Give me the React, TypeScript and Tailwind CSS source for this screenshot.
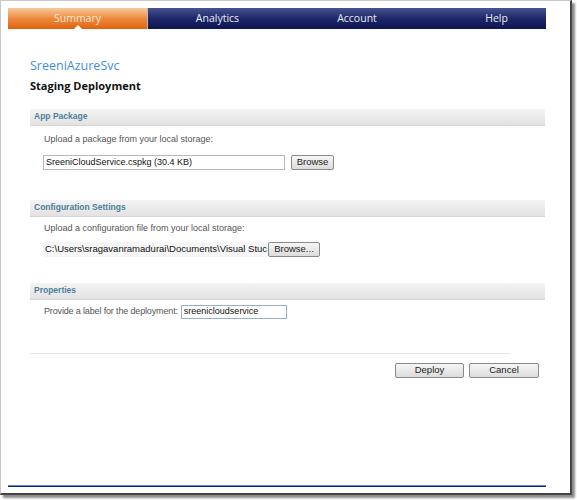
import React from "react";

const font = { fontFamily: '"Open Sans", "Noto Sans", Arial, sans-serif' };
const small = { fontFamily: '"Liberation Sans", Arial, sans-serif' };

function SectionHeader({ title }: { title: string }) {
  return (
    <div className="h-[17px] bg-gradient-to-b from-[#f4f4f4] to-[#e2e2e2] border-b border-[#d6d6d6] flex items-center pl-[4px]">
      <span className="text-[8.5px] font-bold text-[#4f7f9c] leading-none" style={small}>{title}</span>
    </div>
  );
}

function Btn({ label, className = "" }: { label: string; className?: string }) {
  return (
    <div
      className={`h-[15px] border border-[#8a8a8a] rounded-[2px] bg-gradient-to-b from-[#f6f6f6] to-[#dcdcdc] flex items-center justify-center text-[9.5px] text-[#222] leading-none ${className}`}
      style={small}
    >
      {label}
    </div>
  );
}

export default function App() {
  return (
    <div className="w-[577px] h-[500px] bg-white relative" style={font}>
      <div className="w-[572px] h-[495px] border-t border-l border-[#c8c8c8] border-r-2 border-b-2 border-r-[#444] border-b-[#444] shadow-[3px_3px_2px_rgba(0,0,0,0.45)] bg-white flex flex-col">
        {/* nav */}
        <div className="mt-[7px] ml-[7px] w-[538px] h-[21px] flex text-[10.5px] leading-none">
          <div className="w-[139px] relative bg-gradient-to-b from-[#f6c89b] via-[#ec8a3c] to-[#e06208] text-[#fde7d2] flex items-center justify-center">
            Summary
            <div className="absolute bottom-0 left-[66px] w-0 h-0 border-l-[4px] border-r-[4px] border-b-[4px] border-l-transparent border-r-transparent border-b-white" />
          </div>
          <div className="w-[1px] bg-[#c9b9a8]" />
          <div className="flex-1 flex bg-gradient-to-b from-[#4a5290] via-[#1e2768] to-[#0e1650] text-[#e8ecf6]">
            <div className="w-[139px] flex items-center justify-center">Analytics</div>
            <div className="w-[140px] flex items-center justify-center">Account</div>
            <div className="flex-1 flex items-center justify-center pl-[20px]">Help</div>
          </div>
        </div>

        <div className="ml-[29px] mt-[31px] text-[12.5px] leading-none text-[#3d8fe0]">SreeniAzureSvc</div>
        <div className="ml-[29px] mt-[7px] text-[11px] font-bold leading-none text-[#111]">Staging Deployment</div>

        <div className="ml-[29px] w-[515px] mt-[18px] flex flex-col" style={small}>
          <SectionHeader title="App Package" />
          <div className="ml-[14px] mt-[9px] text-[9px] leading-none text-[#555]">Upload a package from your local storage:</div>
          <div className="ml-[13px] mt-[11px] flex items-center gap-[6px]">
            <div className="w-[242px] h-[15px] border border-[#b8b8b8] flex items-center px-[2px] text-[9px] text-[#111] leading-none">
              SreeniCloudService.cspkg (30.4 KB)
            </div>
            <Btn label="Browse" className="w-[43px]" />
          </div>

          <div className="mt-[30px]">
            <SectionHeader title="Configuration Settings" />
          </div>
          <div className="ml-[14px] mt-[7px] text-[9px] leading-none text-[#555]">Upload a configuration file from your local storage:</div>
          <div className="ml-[13px] mt-[9px] flex items-center">
            <div className="w-[225px] h-[15px] overflow-hidden whitespace-nowrap flex items-center px-[2px] text-[9.5px] text-[#111] leading-none bg-[#f6f6f6]">
              C:\Users\sragavanramadurai\Documents\Visual Stuc
            </div>
            <Btn label="Browse..." className="w-[52px]" />
          </div>

          <div className="mt-[26px]">
            <SectionHeader title="Properties" />
          </div>
          <div className="ml-[14px] mt-[5px] flex items-center gap-[3px]">
            <span className="text-[9px] leading-none text-[#555] tracking-[-0.15px]">Provide a label for the deployment:</span>
            <div className="w-[106px] h-[14px] border border-[#9ab0c8] flex items-center px-[2px] text-[9px] text-[#111] leading-none">
              sreenicloudservice
            </div>
          </div>

          <div className="mt-[34px] w-[480px] h-[1px] bg-[#e8e8e8]" />

          <div className="mt-[9px] flex justify-end gap-[5px] pr-[6px]">
            <Btn label="Deploy" className="w-[69px] border-[#4a9bd0]" />
            <Btn label="Cancel" className="w-[70px]" />
          </div>
        </div>

        <div className="mt-auto mb-[6px] ml-[7px] w-[538px] border-t border-[#6d86b8] h-[2px] bg-[#0b2a70]" />
      </div>
    </div>
  );
}
